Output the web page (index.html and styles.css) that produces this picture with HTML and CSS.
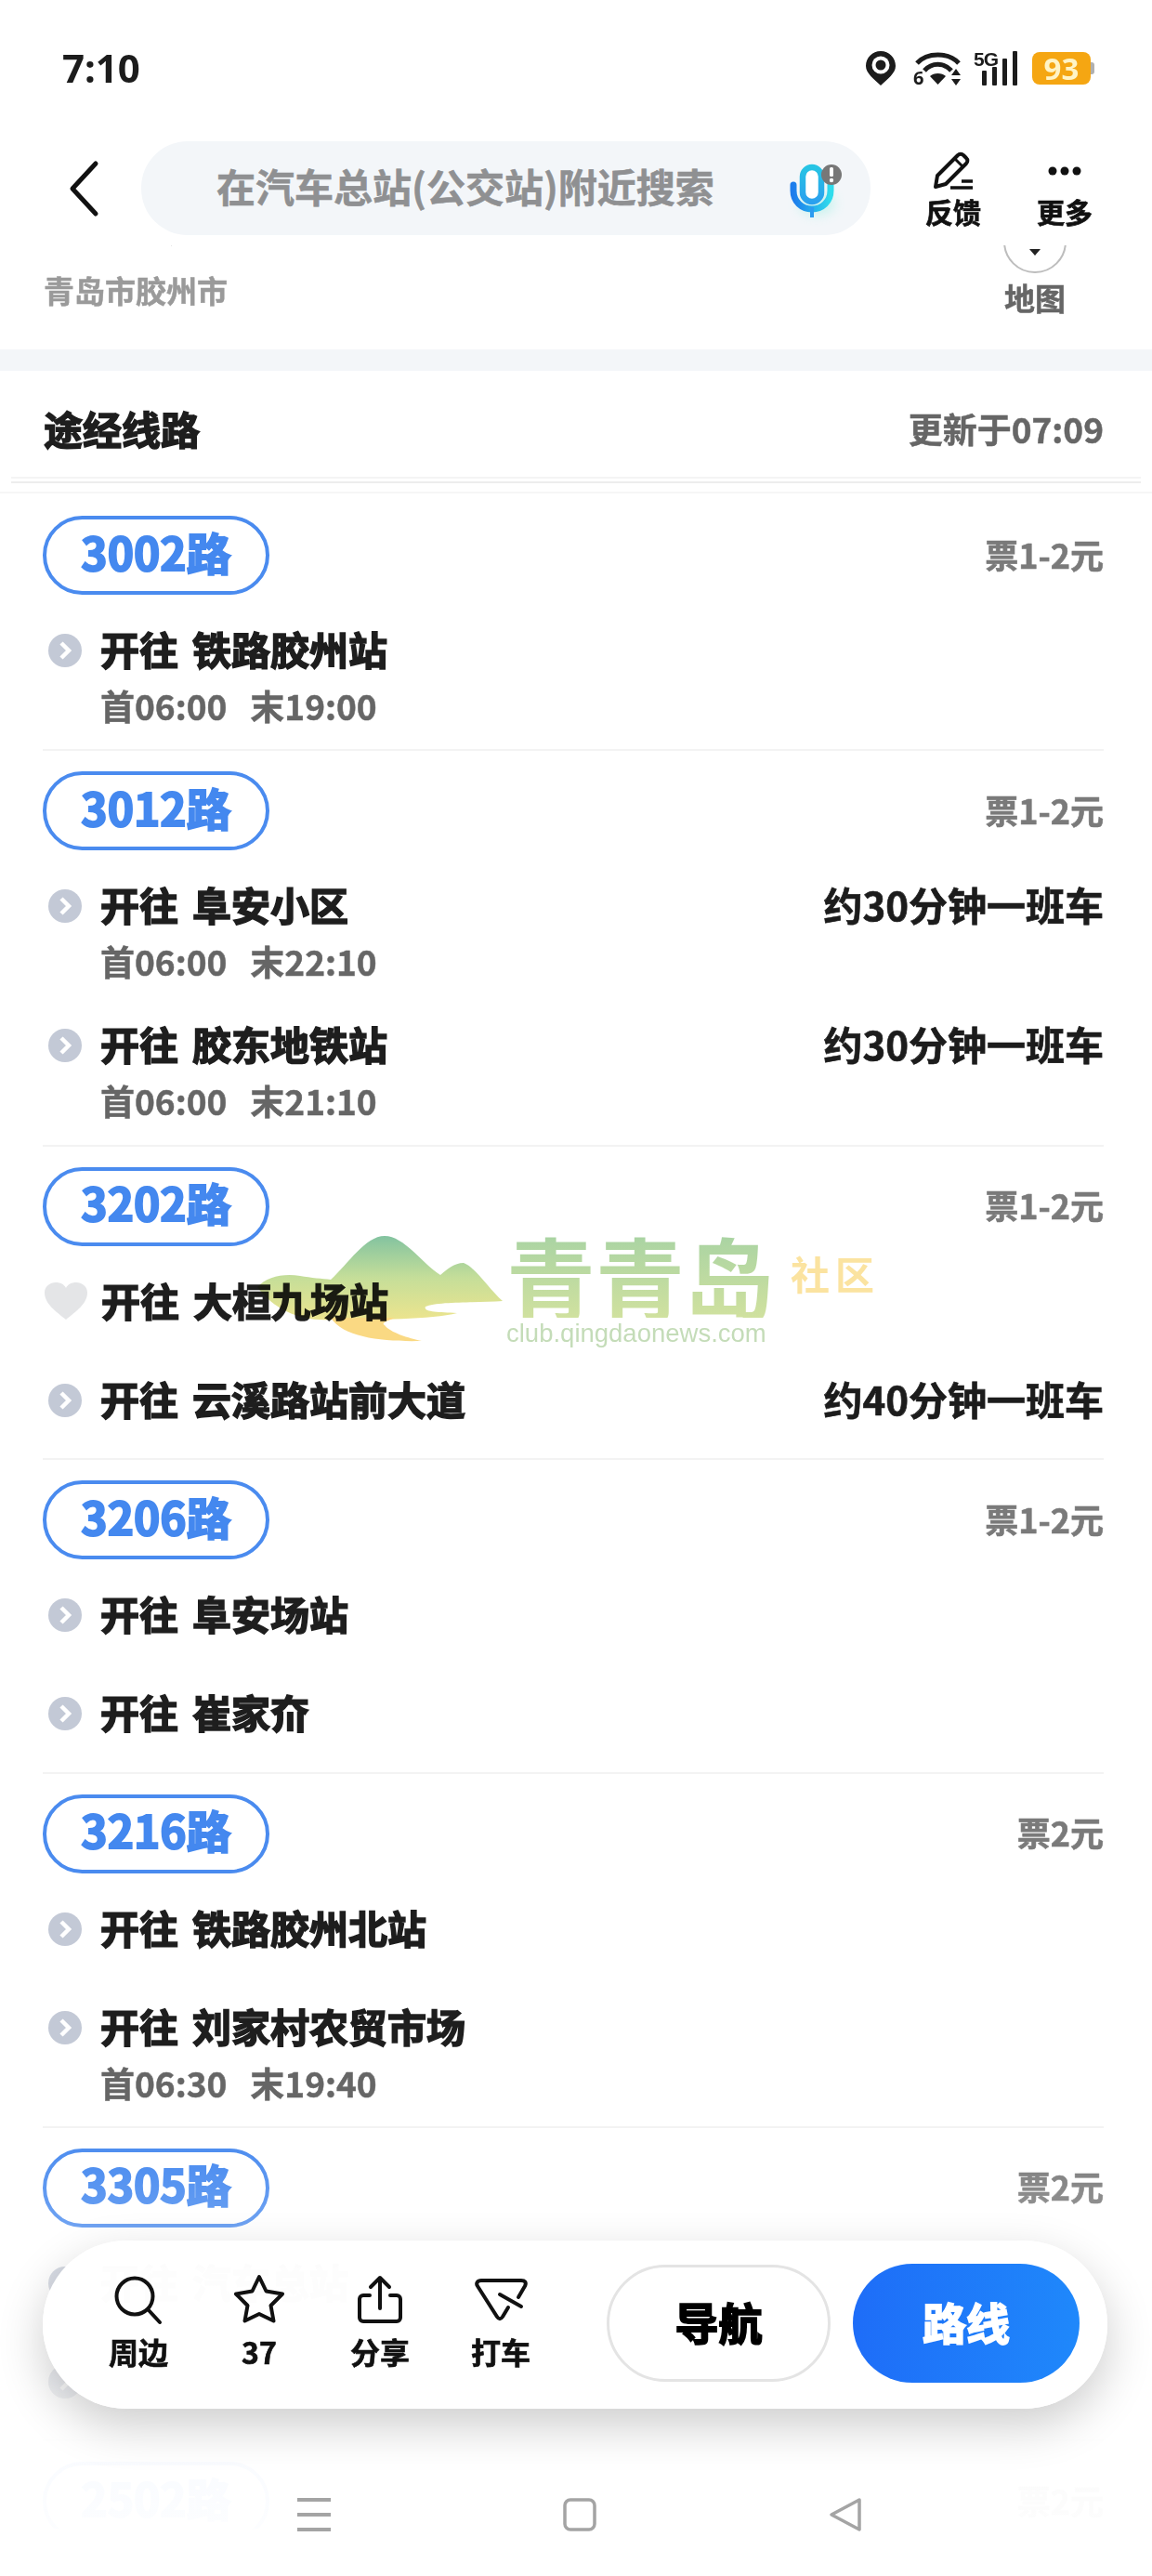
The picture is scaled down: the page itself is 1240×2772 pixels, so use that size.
FILE: index.html
```html
<!DOCTYPE html>
<html lang="zh-CN">
  <head>
    <meta charset="UTF-8" />
    <meta name="viewport" content="width=device-width, initial-scale=1.0" />
    <title>汽车总站(公交站)</title>
    <link rel="stylesheet" href="styles.css">
  </head>
  <body>
    <div class="phone">
      <div class="status">
        <span class="time">7:10</span>
        <div class="status-icons">
          <svg class="ico-pin" width="32" height="37" viewBox="0 0 32 37">
            <path d="M16 0C7 0 0 7 0 16c0 8 9 14 16 21 7-7 16-13 16-21C32 7 25 0 16 0z" fill="#1c1c1c" />
            <circle cx="16" cy="15" r="9.500" fill="#fff" />
            <circle cx="16" cy="15" r="5.500" fill="#1c1c1c" />
          </svg>
          <svg class="ico-wifi" width="52" height="37" viewBox="0 0 52 37">
            <path d="M4 13C15 1 38 1 49 13" fill="none" stroke="#1c1c1c" stroke-width="5" />
            <path d="M12 21C20 12 33 12 41 21" fill="none" stroke="#1c1c1c" stroke-width="5" />
            <path d="M18 27c4-4 13-4 17 0l-8.500 9z" fill="#1c1c1c" />
            <path d="M46 19l5 7h-10zM46 37l5-7h-10z" fill="#1c1c1c" />
            <text x="0" y="36" class="wifi-six">6</text>
          </svg>
          <svg class="ico-signal" width="48" height="38" viewBox="0 0 48 38">
            <text x="0" y="17" class="signal-5g">5G</text>
            <rect x="9" y="22" width="5" height="16" rx="1" fill="#1c1c1c" />
            <rect x="20" y="18" width="5" height="20" rx="1" fill="#1c1c1c" />
            <rect x="31" y="9" width="5" height="29" rx="1" fill="#1c1c1c" />
            <rect x="42" y="1" width="5" height="37" rx="1" fill="#1c1c1c" />
          </svg>
          <div class="battery">93</div>
        </div>
      </div>

      <div class="topbar">
        <svg class="back" width="32" height="60" viewBox="0 0 32 60">
          <path d="M29 3L4 30l25 27" fill="none" stroke="#111" stroke-width="5" stroke-linecap="round" stroke-linejoin="round" />
        </svg>
        <div class="search">
          <span class="search-text">在汽车总站(公交站)附近搜索</span>
          <svg class="mic" width="76" height="76" viewBox="0 0 76 76">
            <defs>
              <linearGradient id="micArc" x1="0" y1="0" x2="1" y2="0">
                <stop offset="0" stop-color="#1c7cec" />
                <stop offset="1" stop-color="#2fdcec" />
              </linearGradient>
              <linearGradient id="micBody" x1="0" y1="0" x2="0" y2="1">
                <stop offset="0" stop-color="#26c4e4" />
                <stop offset="1" stop-color="#2aa0ee" />
              </linearGradient>
              <filter id="micGlow" x="-50%" y="-50%" width="200%" height="200%">
                <feGaussianBlur stdDeviation="6" />
              </filter>
            </defs>
            <ellipse cx="34" cy="50" rx="20" ry="13" fill="#9defe2" opacity=".45" filter="url(#micGlow)" />
            <rect x="19" y="11" width="20" height="37" rx="10" fill="#fff" stroke="url(#micBody)" stroke-width="6.500" />
            <path d="M9 30v6c0 12 9 20 20 20s20-8 20-20v-6" fill="none" stroke="url(#micArc)" stroke-width="7" stroke-linecap="round" />
            <rect x="27" y="54" width="4" height="11" fill="#2b9bf0" />
            <circle cx="50" cy="19" r="11" fill="#777" />
            <rect x="48" y="11" width="4" height="10" rx="1.500" fill="#fff" />
            <circle cx="50" cy="25" r="2.200" fill="#fff" />
          </svg>
        </div>
        <div class="top-action top-action-first">
          <svg width="44" height="42" viewBox="0 0 44 42">
            <path d="M5 26L27 4a4 4 0 0 1 6 0l3 3a4 4 0 0 1 0 6L14 35 3 38z" fill="none" stroke="#111" stroke-width="4" stroke-linejoin="round" />
            <path d="M24 8l8 8" stroke="#111" stroke-width="3" />
            <path d="M19 39h24M31 32h12" stroke="#111" stroke-width="3.500" />
          </svg>
          <span>反馈</span>
        </div>
        <div class="top-action">
          <svg class="more-dots" width="44" height="42" viewBox="0 0 44 42">
            <circle cx="9" cy="20" r="4.500" fill="#111" />
            <circle cx="22" cy="20" r="4.500" fill="#111" />
            <circle cx="35" cy="20" r="4.500" fill="#111" />
          </svg>
          <span>更多</span>
        </div>
      </div>

      <div class="scroller">
        <div class="scroll-content">
          <div class="stop">
            <div>
              <div class="stop-name">正阳公交口</div>
              <div class="stop-city">青岛市胶州市</div>
            </div>
            <div class="map-btn">
              <div class="map-circle"><i></i></div>
              <span>地图</span>
            </div>
          </div>
          <div class="band"></div>

          <div class="heading">
            <span class="heading-title">途经线路</span>
            <span class="heading-time">更新于07:09</span>
          </div>
          <div class="heading-rule"></div>

          <div class="routes">
            <div class="route">
              <div class="route-head">
                <span class="pill">3002路</span>
                <span class="fare">票1-2元</span>
              </div>
              <div class="row">
                <svg class="dot" viewBox="0 0 36 36"><circle cx="18" cy="18" r="18" fill="#c3c9d6" /><path d="M14 10l8 8-8 8" fill="none" stroke="#fff" stroke-width="4.500" /></svg>
                <div class="row-main">
                  <div class="row-top"><span class="title">开往<span class="dest">铁路胶州站</span></span></div>
                  <div class="times"><span>首06:00</span><span>末19:00</span></div>
                </div>
              </div>
            </div>

            <div class="route">
              <div class="route-head">
                <span class="pill">3012路</span>
                <span class="fare">票1-2元</span>
              </div>
              <div class="row">
                <svg class="dot" viewBox="0 0 36 36"><circle cx="18" cy="18" r="18" fill="#c3c9d6" /><path d="M14 10l8 8-8 8" fill="none" stroke="#fff" stroke-width="4.500" /></svg>
                <div class="row-main">
                  <div class="row-top"><span class="title">开往<span class="dest">阜安小区</span></span><span class="freq">约30分钟一班车</span></div>
                  <div class="times"><span>首06:00</span><span>末22:10</span></div>
                </div>
              </div>
              <div class="row">
                <svg class="dot" viewBox="0 0 36 36"><circle cx="18" cy="18" r="18" fill="#c3c9d6" /><path d="M14 10l8 8-8 8" fill="none" stroke="#fff" stroke-width="4.500" /></svg>
                <div class="row-main">
                  <div class="row-top"><span class="title">开往<span class="dest">胶东地铁站</span></span><span class="freq">约30分钟一班车</span></div>
                  <div class="times"><span>首06:00</span><span>末21:10</span></div>
                </div>
              </div>
            </div>

            <div class="route">
              <div class="route-head">
                <span class="pill">3202路</span>
                <span class="fare">票1-2元</span>
              </div>
              <div class="row no-times">
                <svg class="heart" viewBox="0 0 46 40"><path d="M23 40C12 31 0 23 0 11 0 4 6 0 12 0c5 0 9 2 11 6 2-4 6-6 11-6 6 0 12 4 12 11 0 12-12 20-23 29z" fill="#e4e5e7" /></svg>
                <div class="row-main">
                  <div class="row-top"><span class="title">开往<span class="dest">大桓九场站</span></span></div>
                </div>
              </div>
              <div class="row no-times">
                <svg class="dot" viewBox="0 0 36 36"><circle cx="18" cy="18" r="18" fill="#c3c9d6" /><path d="M14 10l8 8-8 8" fill="none" stroke="#fff" stroke-width="4.500" /></svg>
                <div class="row-main">
                  <div class="row-top"><span class="title">开往<span class="dest">云溪路站前大道</span></span><span class="freq">约40分钟一班车</span></div>
                </div>
              </div>
            </div>

            <div class="route">
              <div class="route-head">
                <span class="pill">3206路</span>
                <span class="fare">票1-2元</span>
              </div>
              <div class="row no-times">
                <svg class="dot" viewBox="0 0 36 36"><circle cx="18" cy="18" r="18" fill="#c3c9d6" /><path d="M14 10l8 8-8 8" fill="none" stroke="#fff" stroke-width="4.500" /></svg>
                <div class="row-main">
                  <div class="row-top"><span class="title">开往<span class="dest">阜安场站</span></span></div>
                </div>
              </div>
              <div class="row no-times">
                <svg class="dot" viewBox="0 0 36 36"><circle cx="18" cy="18" r="18" fill="#c3c9d6" /><path d="M14 10l8 8-8 8" fill="none" stroke="#fff" stroke-width="4.500" /></svg>
                <div class="row-main">
                  <div class="row-top"><span class="title">开往<span class="dest">崔家夼</span></span></div>
                </div>
              </div>
            </div>

            <div class="route">
              <div class="route-head">
                <span class="pill">3216路</span>
                <span class="fare">票2元</span>
              </div>
              <div class="row no-times">
                <svg class="dot" viewBox="0 0 36 36"><circle cx="18" cy="18" r="18" fill="#c3c9d6" /><path d="M14 10l8 8-8 8" fill="none" stroke="#fff" stroke-width="4.500" /></svg>
                <div class="row-main">
                  <div class="row-top"><span class="title">开往<span class="dest">铁路胶州北站</span></span></div>
                </div>
              </div>
              <div class="row">
                <svg class="dot" viewBox="0 0 36 36"><circle cx="18" cy="18" r="18" fill="#c3c9d6" /><path d="M14 10l8 8-8 8" fill="none" stroke="#fff" stroke-width="4.500" /></svg>
                <div class="row-main">
                  <div class="row-top"><span class="title">开往<span class="dest">刘家村农贸市场</span></span></div>
                  <div class="times"><span>首06:30</span><span>末19:40</span></div>
                </div>
              </div>
            </div>

            <div class="route">
              <div class="route-head">
                <span class="pill">3305路</span>
                <span class="fare">票2元</span>
              </div>
              <div class="row no-times">
                <svg class="dot" viewBox="0 0 36 36"><circle cx="18" cy="18" r="18" fill="#c3c9d6" /><path d="M14 10l8 8-8 8" fill="none" stroke="#fff" stroke-width="4.500" /></svg>
                <div class="row-main">
                  <div class="row-top"><span class="title">开往<span class="dest">汽车总站</span></span></div>
                </div>
              </div>
              <div class="row no-times">
                <svg class="dot" viewBox="0 0 36 36"><circle cx="18" cy="18" r="18" fill="#c3c9d6" /><path d="M14 10l8 8-8 8" fill="none" stroke="#fff" stroke-width="4.500" /></svg>
                <div class="row-main">
                  <div class="row-top"><span class="title">&nbsp;</span></div>
                </div>
              </div>
            </div>

            <div class="route">
              <div class="route-head">
                <span class="pill">2502路</span>
                <span class="fare">票2元</span>
              </div>
            </div>
          </div>
        </div>
      </div>

      <!-- site stamp, multiplied over the list -->
      <div class="stamp">
        <svg class="stamp-hills" width="270" height="118" viewBox="0 0 270 118">
          <defs>
            <linearGradient id="hill" x1="0" y1="0" x2="0" y2="90" gradientUnits="userSpaceOnUse">
              <stop offset="0" stop-color="#83c3a0" />
              <stop offset=".5" stop-color="#c5de99" />
              <stop offset="1" stop-color="#ece48e" />
            </linearGradient>
          </defs>
          <path d="M2 55C12 44 30 40 48 43C60 45 72 46 81 47C100 30 118 0 139 0C160 0 180 30 199 42C206 36 214 29 224 29C236 33 252 58 266 70C240 72 196 70 183 76C180 82 196 82 217 83C190 90 130 90 81 90C50 92 20 80 2 55z" fill="url(#hill)" />
          <path d="M81 88H150C140 92 135 94 139 96C145 104 165 110 179 113C140 114 95 110 81 88z" fill="#fad983" />
        </svg>
        <div class="stamp-words">
          <div class="stamp-top">
            <span class="stamp-name">青青岛</span>
            <span class="stamp-club">社区</span>
          </div>
          <div class="stamp-url">club.qingdaonews.com</div>
        </div>
      </div>

      <div class="fade"></div>

      <div class="dock">
        <div class="dock-item">
          <div class="dock-icon">
            <svg width="52" height="52" viewBox="0 0 52 52">
              <circle cx="22" cy="23" r="19.500" fill="none" stroke="#111" stroke-width="4" />
              <path d="M37 38l12 13" stroke="#111" stroke-width="4" stroke-linecap="round" />
            </svg>
          </div>
          <span>周边</span>
        </div>
        <div class="dock-item">
          <div class="dock-icon">
            <svg width="56" height="54" viewBox="0 0 56 54">
              <path d="M28 3l7.500 15.500 17.500 3-12.500 12.500 3 16.500L28 43l-15.500 7.500 3-16.500L3 21.500l17.500-3z" fill="none" stroke="#111" stroke-width="4" stroke-linejoin="round" />
            </svg>
          </div>
          <span>37</span>
        </div>
        <div class="dock-item">
          <div class="dock-icon">
            <svg width="50" height="52" viewBox="0 0 50 52">
              <path d="M14 22H7a4 4 0 0 0-4 4v20a4 4 0 0 0 4 4h36a4 4 0 0 0 4-4V26a4 4 0 0 0-4-4h-7" fill="none" stroke="#111" stroke-width="4" stroke-linecap="round" />
              <path d="M25 36V3M15 13L25 3l10 10" fill="none" stroke="#111" stroke-width="4" stroke-linecap="round" stroke-linejoin="round" />
            </svg>
          </div>
          <span>分享</span>
        </div>
        <div class="dock-item">
          <div class="dock-icon">
            <svg width="56" height="46" viewBox="0 0 56 46">
              <path d="M47 21l7-12c2-4 0-6-4-6H7C3 3 1 6 3 9l21 33c2 3 4 3 6 0l6-10" fill="none" stroke="#111" stroke-width="4" stroke-linecap="round" stroke-linejoin="round" />
              <path d="M27 18l23 13" stroke="#111" stroke-width="4" stroke-linecap="round" />
            </svg>
          </div>
          <span>打车</span>
        </div>
        <div class="dock-btns">
          <div class="btn btn-nav"><span>导航</span></div>
          <div class="btn btn-route"><span>路线</span></div>
        </div>
      </div>

      <div class="navbar">
        <svg width="36" height="36" viewBox="0 0 36 36">
          <path d="M0 2h36M0 18h36M0 34h36" stroke="#a4a4a4" stroke-width="4" />
        </svg>
        <svg width="36" height="36" viewBox="0 0 36 36">
          <rect x="2" y="2" width="32" height="32" rx="6" fill="none" stroke="#a4a4a4" stroke-width="3.500" />
        </svg>
        <svg width="36" height="36" viewBox="0 0 36 36">
          <path d="M33 2L3 18l30 16z" fill="none" stroke="#a4a4a4" stroke-width="3.500" stroke-linejoin="round" />
        </svg>
      </div>
    </div>
  </body>
</html>
```

FILE: styles.css
```css
* {
  box-sizing: border-box;
}
html,
body {
  margin: 0;
  height: 100%;
  background: #fff;
}
body {
  font-family: "Noto Sans CJK SC", "Noto Sans", sans-serif;
  font-weight: 700;
  color: #1c1c1c;
  overflow: hidden;
}
svg {
  overflow: visible;
}
.phone {
  position: relative;
  width: 1240px;
  height: 2772px;
  display: flex;
  flex-direction: column;
  overflow: hidden;
  background: #fff;
}

/* status bar */
.status {
  height: 146px;
  display: flex;
  justify-content: space-between;
  align-items: center;
  padding: 0 66px 0 67px;
}
.time {
  font-family: "Noto Sans", sans-serif;
  font-size: 42px;
  line-height: 1;
}
.status-icons {
  display: flex;
  align-items: center;
}
.ico-wifi {
  margin-left: 19px;
}
.ico-signal {
  margin-left: 13px;
}
.wifi-six {
  font-family: "Noto Sans", sans-serif;
  font-size: 20px;
  font-weight: 700;
  fill: #1c1c1c;
}
.signal-5g {
  font-family: "Liberation Sans", sans-serif;
  font-size: 21px;
  font-weight: 700;
  letter-spacing: -1px;
  fill: #1c1c1c;
}
.battery {
  position: relative;
  margin-left: 15px;
  width: 63px;
  height: 35px;
  border-radius: 8px;
  background: #f5a612;
  color: #fff4c6;
  font-family: "Noto Sans", sans-serif;
  font-size: 33px;
  line-height: 35px;
  text-align: center;
}
.battery::after {
  content: "";
  position: absolute;
  right: -4px;
  top: 11px;
  width: 4px;
  height: 13px;
  border-radius: 0 3px 3px 0;
  background: #b0b0b0;
}

/* search header */
.topbar {
  position: relative;
  z-index: 2;
  height: 118px;
  display: flex;
  align-items: flex-start;
  background: #fff;
  padding: 6px 0 0 74px;
}
.back {
  margin: 21px 46px 0 0;
}
.search {
  width: 785px;
  height: 101px;
  border-radius: 50px;
  background: #f3f6f9;
  display: flex;
  align-items: center;
  justify-content: space-between;
  padding: 0 16px 0 81px;
}
.search-text {
  font-size: 42px;
  line-height: 1;
  padding-bottom: 6px;
  color: #8f9092;
  -webkit-text-stroke: .6px #8f9092;
}
.mic {
  margin-top: 9px;
}
.top-action {
  width: 64px;
  margin-left: 56px;
  display: flex;
  flex-direction: column;
  align-items: center;
  padding-top: 11px;
}
.top-action-first {
  margin-left: 57px;
}
.more-dots {
  margin-top: 1px;
  margin-bottom: -1px;
}
.top-action span {
  font-size: 30px;
  line-height: 44px;
  white-space: nowrap;
  color: #111;
  -webkit-text-stroke: .7px #111;
}

/* scrolled content */
.scroller {
  flex: 1;
  min-height: 0;
  overflow: hidden;
}
.scroll-content {
  margin-top: -42px;
}
.stop {
  height: 154px;
  display: flex;
  justify-content: space-between;
  align-items: flex-start;
  padding: 0 92px 0 47px;
}
.stop-name {
  margin-top: -11px;
  font-size: 44px;
  line-height: 60px;
}
.stop-city {
  margin-top: 17px;
  font-size: 33px;
  line-height: 48px;
  color: #9a9a9a;
  -webkit-text-stroke: .5px #9a9a9a;
}
.map-btn {
  margin-top: 4px;
  display: flex;
  flex-direction: column;
  align-items: center;
}
.map-circle {
  width: 68px;
  height: 68px;
  border-radius: 50%;
  border: 2px solid #bdbdbd;
  display: flex;
  justify-content: center;
  padding-top: 40px;
}
.map-circle i {
  width: 0;
  height: 0;
  border-left: 6px solid transparent;
  border-right: 6px solid transparent;
  border-top: 7px solid #222;
}
.map-btn span {
  margin-top: 4px;
  font-size: 33px;
  line-height: 44px;
  color: #666;
  -webkit-text-stroke: .5px #666;
}
.band {
  height: 23px;
  background: #f3f6f9;
}
.heading {
  margin: 0 12px;
  padding: 36px 40px 26px 35px;
  height: 116px;
  display: flex;
  justify-content: space-between;
  align-items: center;
  border-bottom: 2px solid #f4f4f4;
}
.heading-title {
  font-size: 42px;
  line-height: 52px;
  color: #1e1e1e;
  -webkit-text-stroke: 1.600px #1e1e1e;
}
.heading-time {
  font-size: 37px;
  line-height: 52px;
  color: #666;
  -webkit-text-stroke: .5px #666;
}
.heading-rule {
  margin: 3px 12px 0;
  height: 2px;
  background: #ededed;
}

/* route list */
.routes {
  margin-top: 9px;
  padding-top: 2px;
  border-top: 2px solid #f6f6f6;
}
.route {
  margin: 0 52px 0 46px;
  padding: 22px 0 9.400px;
  border-bottom: 2px solid #f3f3f3;
}
.route-head {
  display: flex;
  justify-content: space-between;
  align-items: center;
  margin-bottom: 7px;
}
.pill {
  width: 244px;
  height: 85px;
  padding-bottom: 10px;
  border: 4px solid #4a8bef;
  border-radius: 43px;
  display: flex;
  align-items: center;
  justify-content: center;
  font-size: 48px;
  color: #4488ef;
  -webkit-text-stroke: 2px #4488ef;
}
.fare {
  padding-bottom: 4px;
  font-size: 36px;
  line-height: 1;
  color: #7a7a7a;
  -webkit-text-stroke: .6px #7a7a7a;
}
.row {
  display: flex;
  padding: 30px 0 18px;
}
.row.no-times {
  padding-bottom: 34px;
}
.dot {
  width: 36px;
  height: 36px;
  margin: 5px 20px 0 6px;
  flex: none;
}
.heart {
  width: 46px;
  height: 40px;
  margin: 2px 15px 0 2px;
  flex: none;
}
.row-main {
  flex: 1;
  min-width: 0;
}
.row-top {
  display: flex;
  justify-content: space-between;
}
.title {
  font-size: 42px;
  line-height: 42px;
  color: #1e1e1e;
  white-space: nowrap;
  -webkit-text-stroke: 1.600px #1e1e1e;
}
.dest {
  margin-left: 15px;
}
.freq {
  font-size: 42px;
  line-height: 42px;
  color: #1c1c1c;
  -webkit-text-stroke: .7px #1c1c1c;
}
.times {
  margin-top: 20px;
  display: flex;
  gap: 25px;
  font-size: 37px;
  line-height: 40px;
  color: #666;
  -webkit-text-stroke: .5px #666;
}

/* watermark */
.stamp {
  position: absolute;
  left: 275px;
  top: 1330px;
  display: flex;
  mix-blend-mode: multiply;
}
.stamp-words {
  margin-left: 0;
  margin-top: -4px;
}
.stamp-top {
  display: flex;
  align-items: flex-start;
}
.stamp-name {
  font-size: 96px;
  line-height: 92px;
  background: linear-gradient(#a8d3a3, #d0e19f);
  -webkit-background-clip: text;
  background-clip: text;
  color: transparent;
}
.stamp-club {
  margin: 20px 0 0 18px;
  font-size: 42px;
  line-height: 48px;
  letter-spacing: 6px;
  color: #fbe3a0;
}
.stamp-url {
  margin-top: 1px;
  font-family: "Liberation Sans", sans-serif;
  font-size: 27.500px;
  line-height: 32px;
  font-weight: 400;
  color: #c4dcb8;
}

/* bottom fade behind the dock and nav keys */
.fade {
  position: absolute;
  left: 0;
  right: 0;
  bottom: 0;
  height: 472px;
  background: linear-gradient(rgba(255, 255, 255, 0) 0, rgba(255, 255, 255, .25) 25%, rgba(255, 255, 255, .97) 72%, rgba(255, 255, 255, .985) 89%, #fff 89.500%);
}
.dock {
  position: absolute;
  left: 46px;
  top: 2411px;
  width: 1146px;
  height: 181px;
  display: flex;
  align-items: flex-start;
  padding: 36px 30px 0 38px;
  border-radius: 90px;
  background: rgba(255, 255, 255, .985);
  box-shadow: 0 18px 50px rgba(0, 0, 0, .2);
}
.dock-item {
  width: 130px;
  display: flex;
  flex-direction: column;
  align-items: center;
}
.dock-icon {
  height: 54px;
  display: flex;
  align-items: center;
  justify-content: center;
}
.dock-item span {
  margin-top: 5px;
  font-size: 32px;
  line-height: 48px;
  color: #111;
  -webkit-text-stroke: .7px #111;
}
.dock-btns {
  margin: -11px 0 0 auto;
  display: flex;
  align-items: center;
  gap: 24px;
}
.btn {
  height: 128px;
  border-radius: 64px;
  display: flex;
  align-items: center;
  justify-content: center;
  font-size: 47px;
  padding-bottom: 5px;
}
.btn-nav {
  width: 241px;
  height: 126px;
  border: 3px solid #e4e4e4;
  color: #000;
  -webkit-text-stroke: 1.800px #000;
}
.btn-route {
  width: 244px;
  background: linear-gradient(90deg, #1e6df8, #1f88fb);
  color: #fff;
  -webkit-text-stroke: 1.800px #fff;
}
.navbar {
  position: absolute;
  left: 0;
  right: 0;
  top: 2688px;
  display: flex;
  justify-content: center;
  gap: 250px;
  padding-left: 8px;
}
```
